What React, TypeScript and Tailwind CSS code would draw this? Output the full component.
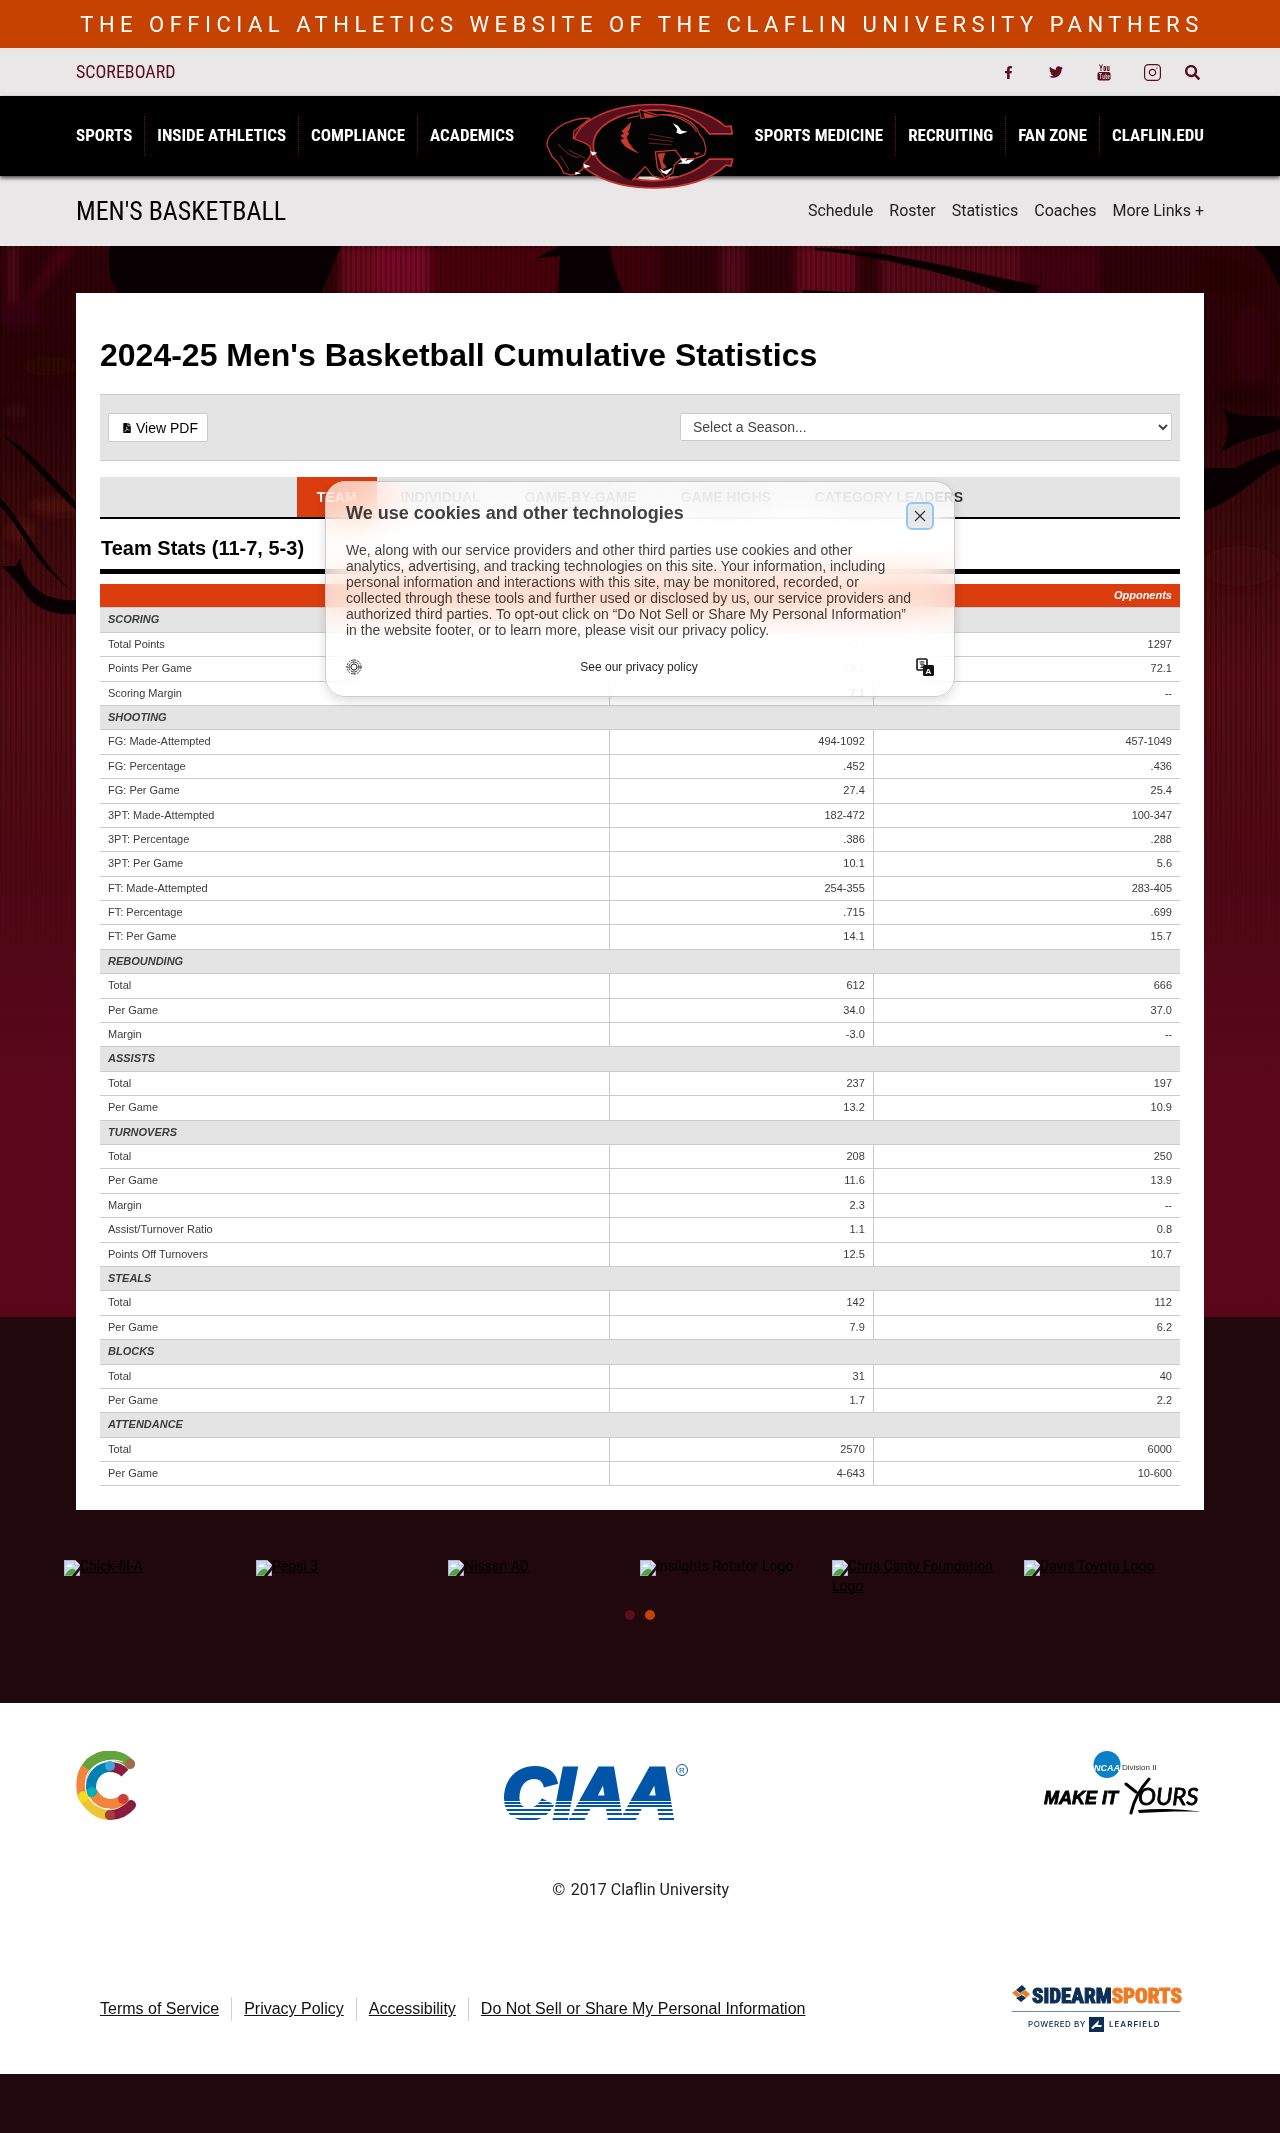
import React from "react";
import { FaFacebookF, FaTwitter, FaSearch, FaFilePdf } from "react-icons/fa";
import { FiInstagram } from "react-icons/fi";

type Row = [string, string, string];
type Section = { title: string; rows: Row[] };

const SECTIONS: Section[] = [
  {
    title: "SCORING",
    rows: [
      ["Total Points", "1424", "1297"],
      ["Points Per Game", "79.1", "72.1"],
      ["Scoring Margin", "7.1", "--"],
    ],
  },
  {
    title: "SHOOTING",
    rows: [
      ["FG: Made-Attempted", "494-1092", "457-1049"],
      ["FG: Percentage", ".452", ".436"],
      ["FG: Per Game", "27.4", "25.4"],
      ["3PT: Made-Attempted", "182-472", "100-347"],
      ["3PT: Percentage", ".386", ".288"],
      ["3PT: Per Game", "10.1", "5.6"],
      ["FT: Made-Attempted", "254-355", "283-405"],
      ["FT: Percentage", ".715", ".699"],
      ["FT: Per Game", "14.1", "15.7"],
    ],
  },
  {
    title: "REBOUNDING",
    rows: [
      ["Total", "612", "666"],
      ["Per Game", "34.0", "37.0"],
      ["Margin", "-3.0", "--"],
    ],
  },
  {
    title: "ASSISTS",
    rows: [
      ["Total", "237", "197"],
      ["Per Game", "13.2", "10.9"],
    ],
  },
  {
    title: "TURNOVERS",
    rows: [
      ["Total", "208", "250"],
      ["Per Game", "11.6", "13.9"],
      ["Margin", "2.3", "--"],
      ["Assist/Turnover Ratio", "1.1", "0.8"],
      ["Points Off Turnovers", "12.5", "10.7"],
    ],
  },
  {
    title: "STEALS",
    rows: [
      ["Total", "142", "112"],
      ["Per Game", "7.9", "6.2"],
    ],
  },
  {
    title: "BLOCKS",
    rows: [
      ["Total", "31", "40"],
      ["Per Game", "1.7", "2.2"],
    ],
  },
  {
    title: "ATTENDANCE",
    rows: [
      ["Total", "2570", "6000"],
      ["Per Game", "4-643", "10-600"],
    ],
  },
];

const LEFT_NAV = ["SPORTS", "INSIDE ATHLETICS", "COMPLIANCE", "ACADEMICS"];
const RIGHT_NAV = ["SPORTS MEDICINE", "RECRUITING", "FAN ZONE", "CLAFLIN.EDU"];
const SUB_NAV = ["Schedule", "Roster", "Statistics", "Coaches", "More Links +"];
const TABS = ["TEAM", "INDIVIDUAL", "GAME-BY-GAME", "GAME HIGHS", "CATEGORY LEADERS"];
const SPONSORS = [
  { name: "Chick-fil-A", link: true },
  { name: "Pepsi 3", link: true },
  { name: "Nissan AD", link: true },
  { name: "Insiights Rotator Logo", link: false },
  { name: "Chris Canty Foundation Logo", link: true },
  { name: "Davis Toyota Logo", link: true },
];
const FOOTER_LINKS = [
  "Terms of Service",
  "Privacy Policy",
  "Accessibility",
  "Do Not Sell or Share My Personal Information",
];

function PantherLogo() {
  return (
    <svg viewBox="50 38 564 257" className="block h-[86px] w-[188px]" role="img" aria-label="Claflin Panthers">
      <ellipse cx="350" cy="166" rx="165" ry="104" fill="#030303" />
      <path d="M316 272 L330 258 L372 258 L392 265 L438 262 L400 273 Z" fill="#d9d7d8" />
      <path
        d="M609 130 L605 107 L588 108 C540 65 460 42 375 42 C235 42 132 98 132 165 C132 235 235 292 375 292 C470 292 548 265 590 224 L605 227 L610 206 L540 206 C505 245 440 268 372 271 C270 268 192 225 192 165 C192 105 270 62 375 58 C450 58 508 88 540 130 Z"
        fill="#5a0f1c"
        stroke="#c8372d"
        strokeWidth="5"
        strokeLinejoin="round"
      />
      <path
        d="M308 270 L348 228 L370 256 L410 266 L421 256 L404 254 L384 232 L378 186 L412 182 L440 180 L462 206 L500 203 L526 193 L530 176 L523 148 L510 130 C500 95 450 70 384 76 L330 57 L333 84 C300 88 250 110 232 140 C200 190 240 245 308 270 Z"
        fill="#030303"
      />
      <path
        d="M308 270 L348 228 L370 256 L412 267 L421 256 M462 206 L500 203 L526 193 L530 176 L523 148 L510 130 C500 95 450 66 384 74 L330 57 L335 84 L382 78 M330 75 L294 84 M400 72 C450 78 490 98 502 124"
        fill="none"
        stroke="#c8372d"
        strokeWidth="3.5"
        strokeLinejoin="round"
      />
      <path d="M342 66 L380 77 L346 82 Z" fill="#c8372d" />
      <path
        d="M306 94 L302 114 L296 124 L300 130 L292 138 C296 158 310 174 330 189 C300 180 280 166 274 148 L284 144 L273 136 L284 128 L276 122 Z"
        fill="#c8372d"
      />
      <path d="M430 98 L446 106 L456 120 L475 124 L452 131 L441 126 L444 116 Z" fill="#ffffff" />
      <path d="M360 131 L432 144 M356 144 L430 153 M358 158 L428 163" stroke="#7d241f" strokeWidth="2.5" />
      <path
        d="M378 184 L438 179 L456 203 L436 222 L430 248 L406 262 L384 232 Z"
        fill="#030303"
        stroke="#c8372d"
        strokeWidth="4"
      />
      <path d="M384 190 L408 187 L400 214 L412 230 L398 238 Z" fill="#c8372d" />
      <path d="M452 204 L474 203 L462 218 Z M478 208 L496 206 L478 220 L444 220 Z M392 234 L404 242 L430 232 L412 252 L398 246 Z" fill="#ffffff" />
      <path d="M493 185 L514 187 L502 196 Z" fill="#c8372d" />
      <path
        d="M182 84 C150 80 110 94 88 110 C60 134 52 144 53 166 L68 198 L86 216 L104 248 L126 254 L140 250 L160 236 L165 216 L176 206 L186 188 L182 168 C170 156 150 152 132 144 L134 122 Z"
        fill="#030303"
        stroke="#c8372d"
        strokeWidth="4"
        strokeLinejoin="round"
      />
      <path d="M86 160 C110 190 130 200 150 200 M118 178 C135 190 150 192 168 204 M94 196 L120 240" fill="none" stroke="#9c3029" strokeWidth="2.5" />
      <path d="M182 182 L204 187 L190 196 Z M162 220 L184 227 L166 233 Z M138 244 L156 248 L138 253 Z" fill="#ffffff" />
    </svg>
  );
}

function YouTubeIcon() {
  return (
    <svg viewBox="0 0 14 17" className="h-[17px] w-[14px]" aria-hidden="true">
      <path
        d="M2.500 0.500 L4 4 V7 M5.500 0.500 L4 4 M7 2.500 V6.500 M8.500 2.500 V6.500 M7 2.500 H8.500 M7 6.500 H8.500 M10.300 2 V6.500 M10.300 6.500 H12 M12 2 V7"
        fill="none"
        stroke="#5b0d1c"
        strokeWidth="1"
      />
      <rect x="0.500" y="8" width="13" height="8.500" rx="2" fill="#5b0d1c" />
      <path
        d="M2 9.500 H5 M3.500 9.500 V15 M5.800 11 V14.500 H7.300 M7.300 11 V15 M8.900 9.500 V14.500 H10 V11.500 H8.900 M12.300 14.500 H11.300 V11.500 H12.300 V13 H11.300"
        fill="none"
        stroke="#e9e7e8"
        strokeWidth="0.7"
      />
    </svg>
  );
}

function Backdrop() {
  return (
    <svg
      viewBox="0 0 1280 1071"
      preserveAspectRatio="none"
      className="absolute left-0 top-0 h-[1071px] w-full"
      aria-hidden="true"
    >
      <defs>
        <linearGradient id="wall" x1="0" y1="0" x2="0" y2="1">
          <stop offset="0" stopColor="#300208" />
          <stop offset="0.14" stopColor="#2c0306" />
          <stop offset="0.28" stopColor="#400a0d" />
          <stop offset="0.4" stopColor="#560c12" />
          <stop offset="0.6" stopColor="#4e0814" />
          <stop offset="0.8" stopColor="#5a0719" />
          <stop offset="1" stopColor="#5b0519" />
        </linearGradient>
        <linearGradient id="fade" x1="0" y1="0" x2="0" y2="1">
          <stop offset="0" stopColor="#fff" />
          <stop offset="0.7" stopColor="#fff" />
          <stop offset="1" stopColor="#000" />
        </linearGradient>
        <pattern id="pins" width="5" height="8" patternUnits="userSpaceOnUse">
          <rect width="2" height="8" fill="#000" opacity="0.22" />
        </pattern>
        <mask id="pinMask">
          <rect width="1280" height="700" fill="url(#fade)" />
        </mask>
        <filter id="soft" x="-30%" y="-30%" width="160%" height="160%">
          <feGaussianBlur stdDeviation="5" />
        </filter>
      </defs>
      <rect width="1280" height="1071" fill="url(#wall)" />
      <g filter="url(#soft)" opacity="0.65">
        <rect x="8" y="0" width="10" height="60" fill="#6a0820" />
        <path d="M60 0 L76 0 L30 60 L22 60 Z" fill="#5c0618" />
        <ellipse cx="20" cy="70" rx="24" ry="14" fill="#3e0412" />
        <ellipse cx="50" cy="120" rx="28" ry="10" fill="#330806" />
        <ellipse cx="16" cy="165" rx="12" ry="8" fill="#3c0a14" />
        <ellipse cx="60" cy="260" rx="30" ry="10" fill="#5c1210" />
        <ellipse cx="20" cy="285" rx="14" ry="12" fill="#5c1410" />
        <rect x="340" y="0" width="90" height="50" fill="#8a0a28" />
        <rect x="376" y="0" width="50" height="50" fill="#a01034" />
        <rect x="430" y="0" width="130" height="50" fill="#5a0510" />
        <rect x="600" y="0" width="60" height="50" fill="#4a0410" />
        <rect x="720" y="0" width="26" height="50" fill="#660820" />
        <rect x="796" y="0" width="60" height="50" fill="#850a28" />
        <rect x="880" y="0" width="140" height="50" fill="#6e0a22" />
        <rect x="1020" y="0" width="80" height="50" fill="#500614" />
        <ellipse cx="1225" cy="30" rx="34" ry="20" fill="#2a0304" />
        <ellipse cx="1250" cy="100" rx="20" ry="40" fill="#3c0610" />
        <ellipse cx="1245" cy="150" rx="30" ry="10" fill="#240204" />
        <ellipse cx="1240" cy="320" rx="40" ry="20" fill="#4c1009" />
      </g>
      <g fill="#0a0004">
        <path d="M110 0 L341 0 L320 50 L120 50 C108 34 108 16 110 0 Z" />
        <path d="M560 0 L610 0 C612 20 618 36 626 50 L558 50 L560 10 L536 12 Z" />
        <path d="M815 2 C880 2 960 24 1040 40 L1034 50 L1010 50 C960 30 880 10 815 4 Z" />
        <path d="M803 44 L880 48 L880 52 L803 52 Z" />
        <path d="M1254 0 L1280 0 L1280 42 C1272 22 1264 10 1254 0 Z" />
        <path d="M1222 162 C1240 174 1262 168 1280 171 L1280 184 C1260 190 1240 194 1221 206 C1230 190 1230 176 1222 162 Z" />
        <path d="M1200 222 L1236 222 C1250 214 1268 206 1280 203 L1280 218 C1260 226 1236 256 1200 266 Z" />
        <path d="M4 190 C30 204 50 230 76 256 L76 264 C50 240 30 214 4 190 Z" />
        <path d="M0 252 C20 270 36 312 76 350 L50 326 C34 312 12 270 0 260 Z" />
        <path d="M2 320 L16 320 L20 312 C26 340 44 356 76 354 L76 368 C50 370 30 360 22 342 Z" />
      </g>
      <rect width="1280" height="700" fill="url(#pins)" mask="url(#pinMask)" />
    </svg>
  );
}

function NavGroup({ items }: { items: string[] }) {
  return (
    <ul className="flex">
      {items.map((item, i) => (
        <li
          key={item}
          className={
            "flex h-10 items-center " +
            (i > 0 ? "pl-3 " : "") +
            (i < items.length - 1 ? "border-r border-dotted border-[#6b1524] pr-3" : "")
          }
        >
          <a href="#" className="whitespace-nowrap font-['Roboto_Condensed','Liberation_Sans_Narrow','Liberation_Sans',sans-serif] text-[17px] font-bold text-white">
            {item}
          </a>
        </li>
      ))}
    </ul>
  );
}

function StatsTable() {
  return (
    <table className="w-full table-fixed border-collapse text-[11px] leading-[1.4] text-[#3c3c3c]">
      <colgroup>
        <col className="w-[47.2%]" />
        <col className="w-[24.4%]" />
        <col />
      </colgroup>
      <thead>
        <tr className="bg-[#db3d0f] text-right font-bold italic text-white">
          <th scope="col" className="px-2 py-1" aria-label="Statistic" />
          <th scope="col" className="px-2 py-1">Claflin</th>
          <th scope="col" className="px-2 py-1">Opponents</th>
        </tr>
      </thead>
      {SECTIONS.map((s) => (
        <tbody key={s.title}>
          <tr className="border-y border-[#cbcbcb] bg-[#e4e4e4]">
            <th scope="rowgroup" colSpan={3} className="px-2 py-1 text-left font-bold italic">
              {s.title}
            </th>
          </tr>
          {s.rows.map(([label, us, them]) => (
            <tr key={label} className="border-b border-[#cbcbcb]">
              <th scope="row" className="px-2 py-1 text-left font-normal">{label}</th>
              <td className="border-x border-[#cbcbcb] px-2 py-1 text-right">{us}</td>
              <td className="px-2 py-1 text-right">{them}</td>
            </tr>
          ))}
        </tbody>
      ))}
    </table>
  );
}

function CookieDialog() {
  return (
    <div
      role="dialog"
      aria-labelledby="cookie-title"
      className="absolute inset-x-0 top-[481px] z-20 mx-auto w-[630px] rounded-[20px] border border-[#c9c9c9] bg-white/75 px-5 pb-5 pt-5 opacity-[0.93] shadow-[0_4px_12px_rgba(0,0,0,0.15)] backdrop-blur-[20px] backdrop-brightness-110 backdrop-saturate-200"
    >
      <div className="flex justify-between">
        <h2 id="cookie-title" className="text-lg leading-[22px] font-bold text-[#333]">
          We use cookies and other technologies
        </h2>
        <button
          type="button"
          aria-label="Close"
          className="flex h-[28px] w-[28px] items-center justify-center rounded-md border-2 border-[#8cc4fb] bg-[#e6e8ea]"
        >
          <svg viewBox="0 0 12 12" className="h-3 w-3" aria-hidden="true">
            <path d="M1 1 L11 11 M11 1 L1 11" stroke="#222" strokeWidth="1.2" />
          </svg>
        </button>
      </div>
      <p className="mt-3 w-[566px] text-sm leading-4 text-[#333]">
        We, along with our service providers and other third parties use cookies and other{" "}
        <br />
        analytics, advertising, and tracking technologies on this site. Your information, including{" "}
        <br />
        personal information and interactions with this site, may be monitored, recorded, or{" "}
        <br />
        <span className="whitespace-nowrap">
          collected through these tools and further used or disclosed by us, our service providers and
        </span>{" "}
        <br />
        authorized third parties. To opt-out click on “Do Not Sell or Share My Personal Information”{" "}
        <br />
        in the website footer, or to learn more, please visit our privacy policy.
      </p>
      <div className="mt-5 flex items-center justify-between">
        <svg viewBox="0 0 16 16" className="h-4 w-4" fill="none" stroke="#222" aria-hidden="true">
          <circle cx="8" cy="8" r="7" strokeDasharray="2 1" />
          <circle cx="8" cy="8" r="5" strokeDasharray="3 1" />
          <circle cx="8" cy="8" r="3" />
          <path d="M8 0 V5 M8 11 V16 M0 8 H5 M11 8 H16" strokeWidth="0.6" />
        </svg>
        <a href="#" className="text-xs text-[#111]">See our privacy policy</a>
        <button type="button" aria-label="Language">
          <svg viewBox="0 0 18 18" className="h-[18px] w-[18px]" aria-hidden="true">
            <rect x="1" y="1" width="10" height="11" rx="1" fill="#fff" stroke="#000" strokeWidth="1.6" />
            <path d="M3.500 4 H8.500 M6 3 V4 M4 6 H8 V9.500 H4.500 M6 6 V9" fill="none" stroke="#000" strokeWidth="0.9" />
            <rect x="7" y="7" width="11" height="11" rx="1.500" fill="#000" />
            <text x="12.500" y="15.500" fontSize="8" fontWeight="700" textAnchor="middle" fill="#fff" fontFamily="Liberation Sans">
              A
            </text>
          </svg>
        </button>
      </div>
    </div>
  );
}

function BrokenImage() {
  return (
    <svg viewBox="0 0 16 16" className="inline-block h-4 w-4 align-bottom" aria-hidden="true">
      <path d="M0 0 H11 L16 5 V16 H0 Z" fill="#c6d8f5" stroke="#9a9a9a" strokeWidth="1" />
      <path d="M11 0 V5 H16 Z" fill="#fff" stroke="#9a9a9a" strokeWidth="0.8" />
      <path d="M2.500 7 C2.500 5 4 5 4.500 5 C5 3.500 7.500 4 7.500 5.500 C9 5.500 9 7 8 7 Z" fill="#fff" />
      <path d="M1 15.500 C3 11 7 8 10 9 L12 11 L9 15.500 Z" fill="#4fa53a" />
      <path d="M8 16 L16 6 V10 L11.500 16 Z" fill="#20080c" />
    </svg>
  );
}

function ClaflinLogo() {
  return (
    <svg viewBox="0 0 60 69" className="h-[69px] w-[60px]" role="img" aria-label="Claflin University" fill="none">
      <g strokeWidth="10">
        <path d="M54 13 C45 3 28 2 18 9 C14 11 11 15 9 19" stroke="#66a33c" strokeLinecap="round" />
        <path d="M10 17 C5 24 4 36 7 46" stroke="#f4843c" />
        <path d="M7 45 C12 56 23 64 34 64" stroke="#edc534" strokeLinecap="round" />
        <path d="M34 64 C42 64 50 60 55 54" stroke="#8a1c3f" strokeLinecap="round" />
      </g>
      <g strokeWidth="10">
        <path d="M34 16 C24 16 15 24 15 36 C15 39 15 41 17 43" stroke="#0080b5" />
        <path d="M34 16 C40 16 44 17 49 22" stroke="#8a1c3f" />
        <path d="M17 42 C22 50 28 53 34 53 C40 53 44 51 48 48" stroke="#f4843c" strokeLinecap="round" />
      </g>
      <path d="M47 11 C34 6 18 12 12 22 C8 30 9 40 12 46 C17 54 24 58 34 58" stroke="#fff" strokeWidth="1" />
      <circle cx="34" cy="15" r="5" fill="#3ba7d8" />
      <circle cx="54" cy="13" r="5" fill="#a56a4c" />
      <circle cx="16" cy="41" r="5" fill="#00b3b3" />
      <circle cx="7" cy="46" r="5" fill="#f7dc1b" />
      <circle cx="34" cy="64" r="5" fill="#a63f3c" />
      <circle cx="47" cy="48" r="5" fill="#c8413b" />
    </svg>
  );
}

function CiaaLogo() {
  return (
    <svg viewBox="0 0 186 58" className="h-[58px] w-[186px] overflow-visible" role="img" aria-label="CIAA">
      <text
        x="1"
        y="55"
        fontFamily="Liberation Sans"
        fontSize="71"
        fontWeight="700"
        fontStyle="italic"
        fill="#0055a8"
        stroke="#0055a8"
        strokeWidth="5"
      >
        CIAA
      </text>
      <g fill="#fff">
        <rect y="38" width="177" height="1" />
        <rect y="41" width="177" height="1" />
        <rect y="44" width="177" height="2" />
        <rect y="48" width="177" height="2" />
        <rect y="52" width="177" height="3" />
        <rect y="57" width="177" height="3" />
      </g>
      <circle cx="180" cy="7" r="5.500" fill="none" stroke="#0055a8" />
      <text x="180" y="10" fontSize="8" textAnchor="middle" fill="#0055a8" fontFamily="Liberation Sans">
        R
      </text>
    </svg>
  );
}

function NcaaLogo() {
  return (
    <svg viewBox="0 0 162 64" className="h-[64px] w-[162px] overflow-visible" role="img" aria-label="NCAA Division II Make It Yours">
      <circle cx="65" cy="13.500" r="13.500" fill="#0a80c8" />
      <text x="65" y="20" fontFamily="Liberation Sans" fontSize="9" fontWeight="700" fontStyle="italic" textAnchor="middle" fill="#fff">
        NCAA
      </text>
      <text x="80" y="19" fontFamily="Liberation Sans" fontSize="8" fill="#333">
        Division II
      </text>
      <text x="2" y="53" fontFamily="Liberation Sans" fontSize="18" fontWeight="700" fontStyle="italic" fill="#000" stroke="#000" strokeWidth="0.8">
        MAKE IT
      </text>
      <path d="M84 33 L94 41 M107 28 C98 38 92 48 89 62" fill="none" stroke="#000" strokeWidth="3" strokeLinecap="round" />
      <text x="96" y="54" fontFamily="Lato" fontSize="24" fontStyle="italic" fill="#000" stroke="#000" strokeWidth="0.8">
        OURS
      </text>
      <path d="M96 59 C118 57 142 58 159 61 C142 60 118 61 97 62 Z" fill="#000" />
    </svg>
  );
}

function SidearmLogo() {
  return (
    <svg viewBox="0 0 168 50" className="h-[50px] w-[168px] overflow-visible" role="img" aria-label="Sidearm Sports, powered by Learfield">
      <path d="M4 6 L10 1 L14 5 L8 9 Z M4 14 L10 11 L14 14 L9 18 Z" fill="#0b2f55" />
      <path d="M0 9 L4 6 L7 10 L13 6 L18 10 L14 14 L11 10 L5 13 Z" fill="#f07a24" />
      <text x="20" y="19" fontFamily="Roboto Condensed, Liberation Sans Narrow, Liberation Sans" fontSize="21" fontWeight="800" fill="#0b2f55" stroke="#0b2f55" strokeWidth="1">
        SIDEARM<tspan fill="#f07a24" stroke="#f07a24">SPORTS</tspan>
      </text>
      <rect y="27" width="168" height="1" fill="#6f8aa5" />
      <text x="16" y="43" fontFamily="Inter" fontSize="8" fontWeight="500" letterSpacing="0.5" fill="#0b2f55">
        POWERED BY
      </text>
      <rect x="77" y="33" width="15" height="15" fill="#0b2f55" />
      <path d="M79 44 L87 36 L86 41 H90 L89 43 H83 L81 45 Z" fill="#fff" />
      <text x="97" y="43" fontFamily="Inter" fontSize="8" fontWeight="600" letterSpacing="1" fill="#0b2f55">
        LEARFIELD
      </text>
    </svg>
  );
}

export default function App() {
  return (
    <div className="relative overflow-hidden bg-[#20080c] font-['Liberation_Sans',Arial,sans-serif]">
      <div className="flex h-12 items-center justify-center bg-[#c64200]">
        <p className="whitespace-nowrap pl-1 font-['Roboto',sans-serif] text-[22px] tracking-[0.25em] text-white">
          THE OFFICIAL ATHLETICS WEBSITE OF THE CLAFLIN UNIVERSITY PANTHERS
        </p>
      </div>

      <div className="bg-[#e9e7e8]">
        <div className="mx-auto flex h-12 max-w-[1128px] items-center justify-between text-[#5b0d1c]">
          <a href="#" className="font-['Roboto_Condensed','Liberation_Sans_Narrow','Liberation_Sans',sans-serif] text-lg">
            SCOREBOARD
          </a>
          <div className="flex items-center">
            <a href="#" aria-label="Facebook" className="flex w-12 justify-center"><FaFacebookF size={13} /></a>
            <a href="#" aria-label="Twitter" className="flex w-12 justify-center"><FaTwitter size={14} /></a>
            <a href="#" aria-label="YouTube" className="flex w-12 justify-center"><YouTubeIcon /></a>
            <a href="#" aria-label="Instagram" className="flex w-12 justify-center"><FiInstagram size={19} strokeWidth={1.5} /></a>
            <button type="button" aria-label="Search" className="flex w-7 justify-end pr-1"><FaSearch size={15} /></button>
          </div>
        </div>
      </div>

      <header className="relative z-10 bg-black shadow-[0_2px_4px_rgba(0,0,0,0.7)]">
        <nav className="mx-auto flex h-20 max-w-[1128px] items-center justify-between">
          <NavGroup items={LEFT_NAV} />
          <a href="#" className="absolute left-1/2 top-[7px] -translate-x-1/2"><PantherLogo /></a>
          <NavGroup items={RIGHT_NAV} />
        </nav>
      </header>

      <div className="bg-[#e9e7e8]">
        <div className="mx-auto flex h-[70px] max-w-[1128px] items-center justify-between">
          <h2 className="font-['Roboto_Condensed','Liberation_Sans_Narrow','Liberation_Sans',sans-serif] text-[26px] text-black">
            MEN'S BASKETBALL
          </h2>
          <ul className="flex gap-4 font-['Roboto',sans-serif] text-base text-[#222]">
            {SUB_NAV.map((s) => (
              <li key={s}><a href="#">{s}</a></li>
            ))}
          </ul>
        </div>
      </div>

      <div className="relative pt-[47px]">
        <Backdrop />
        <main className="relative mx-auto max-w-[1128px] bg-white px-6 pb-6 pt-11 text-black">
          <h1 className="text-[32px] leading-9 font-bold">2024-25 Men's Basketball Cumulative Statistics</h1>

          <div className="mt-[21px] flex items-start justify-between border-y border-[#cbcbcb] bg-[#e4e4e4] px-2 py-[18px]">
            <button type="button" className="flex h-[29px] w-[100px] items-center justify-end gap-1 rounded-[2px] border border-[#cbcbcb] bg-white pr-[9px] text-sm">
              <FaFilePdf size={10} />
              View PDF
            </button>
            <select
              aria-label="Select a Season"
              defaultValue=""
              className="h-[28px] w-[492px] rounded-[2px] border border-[#cbcbcb] bg-white px-2 text-sm text-[#444]"
            >
              <option value="">Select a Season...</option>
            </select>
          </div>

          <ul className="mt-4 flex h-[42px] justify-center gap-1 border-b-2 border-black bg-[#e4e4e4] text-sm font-bold text-[#333]">
            {TABS.map((t, i) => (
              <li key={t} className="flex">
                <a href="#" className={"flex items-center px-5 " + (i === 0 ? "bg-[#db3d0f] text-white" : "")}>{t}</a>
              </li>
            ))}
          </ul>

          <h3 className="mb-[10px] border-b-[5px] border-black pb-[9px] pl-px pt-[17px] text-[20px] leading-6 font-bold">
            Team Stats (11-7, 5-3)
          </h3>
          <StatsTable />
        </main>
      </div>

      <section aria-label="Sponsors" className="mx-auto max-w-[1152px] pb-[83px] pt-[46px]">
        <ul className="grid grid-cols-6 font-['Roboto',sans-serif] text-sm leading-5 text-black">
          {SPONSORS.map((s) => (
            <li key={s.name} className="pr-4">
              {s.link ? (
                <a href="#" className="underline"><BrokenImage />{s.name}</a>
              ) : (
                <span><BrokenImage />{s.name}</span>
              )}
            </li>
          ))}
        </ul>
        <div className="mt-[14px] flex justify-center gap-[10px]">
          <button type="button" aria-label="Slide 1" className="h-[10px] w-[10px] rounded-full bg-[#5b0d1c]" />
          <button type="button" aria-label="Slide 2" className="h-[10px] w-[10px] rounded-full bg-[#c64200]" />
        </div>
      </section>

      <footer className="mb-[60px] bg-white">
        <div className="mx-auto max-w-[1128px] pt-12">
          <div className="flex justify-between">
            <a href="#"><ClaflinLogo /></a>
            <a href="#" className="ml-3 pt-3"><CiaaLogo /></a>
            <a href="#"><NcaaLogo /></a>
          </div>
          <p className="mt-[57px] text-center font-['Roboto',sans-serif] text-base leading-6 text-[#222]">
            <span className="font-['DejaVu_Serif',serif]">©</span> 2017 Claflin University
          </p>
          <div className="mt-[82px] flex items-center justify-between px-6 pb-[40px]">
            <ul className="flex text-base text-[#111]">
              {FOOTER_LINKS.map((l, i) => (
                <li
                  key={l}
                  className={
                    "flex h-6 items-center " +
                    (i > 0 ? "pl-3 " : "") +
                    (i < FOOTER_LINKS.length - 1 ? "border-r border-[#d0d0d0] pr-3" : "")
                  }
                >
                  <a href="#" className="underline">{l}</a>
                </li>
              ))}
            </ul>
            <a href="#"><SidearmLogo /></a>
          </div>
        </div>
      </footer>

      <CookieDialog />
    </div>
  );
}
